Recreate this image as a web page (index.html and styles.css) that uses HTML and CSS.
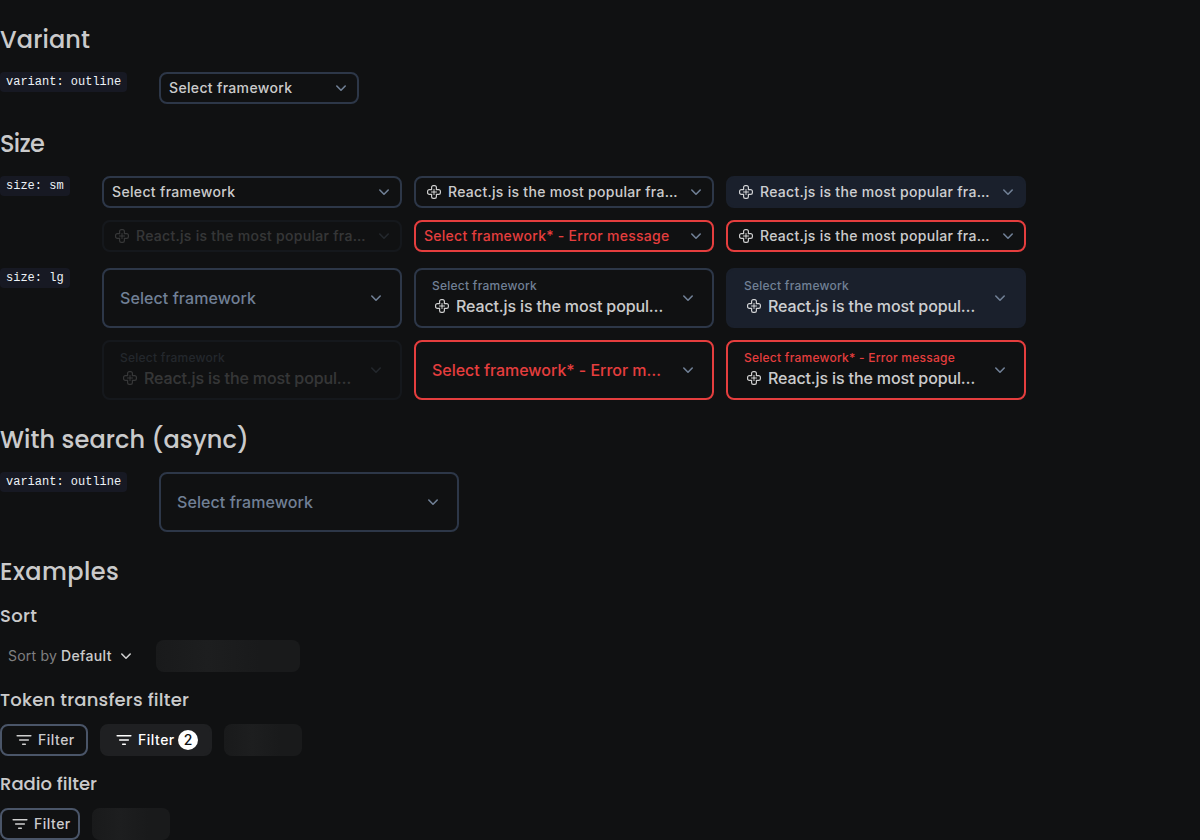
FILE: index.html
```html
<!DOCTYPE html>
<html lang="en">
<head>
<meta charset="utf-8">
<title>Select</title>
<link rel="stylesheet" href="styles.css">
</head>
<body>
<svg class="sprite" aria-hidden="true">
  <symbol id="chevron" viewBox="0 0 20 20"><path d="M5.8 8 10 12.2 14.2 8" fill="none" stroke="currentColor" stroke-width="1.6" stroke-linecap="round" stroke-linejoin="round"/></symbol>
  <symbol id="flower" viewBox="0 0 20 20"><g fill="none" stroke="currentColor" stroke-width="1.2"><path d="M7.6 7.6V5.3a1.7 1.7 0 0 1 1.7-1.7h1.4a1.7 1.7 0 0 1 1.7 1.7V7.6h2.3a1.7 1.7 0 0 1 1.7 1.7v1.4a1.7 1.7 0 0 1-1.7 1.7H12.4v2.3a1.7 1.7 0 0 1-1.7 1.7H9.3a1.7 1.7 0 0 1-1.7-1.7V12.4H5.3a1.7 1.7 0 0 1-1.7-1.7V9.3a1.7 1.7 0 0 1 1.7-1.7z"/><path d="M10 7v6M7 10h6" stroke-width="1"/></g></symbol>
  <symbol id="filter" viewBox="0 0 20 20"><path d="M3.2 5.8h13.6M5.7 10h8.6M8.7 14.2h2.6" fill="none" stroke="currentColor" stroke-width="1.6" stroke-linecap="round"/></symbol>
</svg>
<main class="page">
  <h2 class="h-variant">Variant</h2>
  <div class="samples">
    <div><code>variant: outline</code></div>
    <div class="select narrow"><span class="value">Select framework</span><svg class="chevron"><use href="#chevron"/></svg></div>
  </div>

  <h2 class="h-size">Size</h2>
  <div class="samples sizes">
    <div><code>size: sm</code></div>
    <div class="grid">
      <div class="select"><span class="value">Select framework</span><svg class="chevron"><use href="#chevron"/></svg></div>
      <div class="select"><svg class="icon"><use href="#flower"/></svg><span class="value">React.js is the most popular framework</span><svg class="chevron"><use href="#chevron"/></svg></div>
      <div class="select readonly"><svg class="icon"><use href="#flower"/></svg><span class="value">React.js is the most popular framework</span><svg class="chevron"><use href="#chevron"/></svg></div>
      <div class="select disabled"><svg class="icon"><use href="#flower"/></svg><span class="value">React.js is the most popular framework</span><svg class="chevron"><use href="#chevron"/></svg></div>
      <div class="select invalid"><span class="value error">Select framework* - Error message</span><svg class="chevron"><use href="#chevron"/></svg></div>
      <div class="select invalid"><svg class="icon"><use href="#flower"/></svg><span class="value">React.js is the most popular framework</span><svg class="chevron"><use href="#chevron"/></svg></div>
    </div>
    <div><code>size: lg</code></div>
    <div class="grid">
      <div class="select lg"><span class="value muted">Select framework</span><svg class="chevron"><use href="#chevron"/></svg></div>
      <div class="select lg"><div class="stack"><span class="label">Select framework</span><div class="line"><svg class="icon"><use href="#flower"/></svg><span class="value">React.js is the most popular framework</span></div></div><svg class="chevron"><use href="#chevron"/></svg></div>
      <div class="select lg readonly"><div class="stack"><span class="label">Select framework</span><div class="line"><svg class="icon"><use href="#flower"/></svg><span class="value">React.js is the most popular framework</span></div></div><svg class="chevron"><use href="#chevron"/></svg></div>
      <div class="select lg disabled"><div class="stack"><span class="label">Select framework</span><div class="line"><svg class="icon"><use href="#flower"/></svg><span class="value">React.js is the most popular framework</span></div></div><svg class="chevron"><use href="#chevron"/></svg></div>
      <div class="select lg invalid"><span class="value error">Select framework* - Error message</span><svg class="chevron"><use href="#chevron"/></svg></div>
      <div class="select lg invalid"><div class="stack"><span class="label error">Select framework* - Error message</span><div class="line"><svg class="icon"><use href="#flower"/></svg><span class="value">React.js is the most popular framework</span></div></div><svg class="chevron"><use href="#chevron"/></svg></div>
    </div>
  </div>

  <h2 class="h-search">With search (async)</h2>
  <div class="samples">
    <div><code>variant: outline</code></div>
    <div class="select lg wide"><span class="value muted">Select framework</span><svg class="chevron"><use href="#chevron"/></svg></div>
  </div>

  <h2 class="h-examples">Examples</h2>
  <h3 class="h-sort">Sort</h3>
  <div class="row sort-row">
    <div class="sort"><span class="by">Sort by</span><span>Default</span><svg class="chevron"><use href="#chevron"/></svg></div>
    <div class="skeleton long"></div>
  </div>
  <h3 class="h-token">Token transfers filter</h3>
  <div class="row">
    <div class="filter"><svg class="icon"><use href="#filter"/></svg><span class="text">Filter</span></div>
    <div class="filter active"><svg class="icon"><use href="#filter"/></svg><span class="text">Filter</span><span class="count">2</span></div>
    <div class="skeleton"></div>
  </div>
  <h3 class="h-radio">Radio filter</h3>
  <div class="row">
    <div class="filter compact"><svg class="icon"><use href="#filter"/></svg><span class="text">Filter</span></div>
    <div class="skeleton"></div>
  </div>
</main>
</body>
</html>
```
FILE: styles.css
```css
* { box-sizing: border-box; }
html { overflow: hidden; }
body {
  margin: 0;
  background: #101112;
  color: rgba(255, 255, 255, 0.8);
  font: 500 14px/20px Inter, "Liberation Sans", sans-serif;
  letter-spacing: 0.29px;
}
.sprite { display: none; }
.page { padding-top: 24px; }
h2, h3 { margin: 0; font-family: Poppins, Inter, sans-serif; font-weight: 500; white-space: nowrap; }
h2 { font-size: 24px; line-height: 32px; margin-bottom: 16px; letter-spacing: 0.1px; }
h3 { font-size: 18px; line-height: 24px; margin-bottom: 12px; letter-spacing: 0.2px; }
.h-size { letter-spacing: -0.7px; }
.h-examples { letter-spacing: 0.4px; }
.h-radio { letter-spacing: 0; }
.h-sort { letter-spacing: 0.35px; }
.samples {
  display: grid;
  grid-template-columns: 127px max-content;
  column-gap: 32px;
  row-gap: 16px;
  align-items: start;
  margin-bottom: 24px;
}
.sizes { grid-template-columns: 70px max-content; }
code {
  display: block;
  height: 20px;
  padding: 1px 0 0 6px;
  border-radius: 4px;
  background: #171923;
  color: #edf2f7;
  font: 400 12px/19px "Liberation Mono", monospace;
  letter-spacing: 0;
  white-space: nowrap;
}
.grid { display: grid; grid-template-columns: repeat(3, 300px); gap: 12px; }
.select {
  display: flex;
  align-items: center;
  height: 32px;
  padding: 0 6px 0 8px;
  border: 2px solid #2d3748;
  border-radius: 8px;
}
.narrow { width: 200px; }
.wide { width: 300px; }
.value { flex: 1; min-width: 0; overflow: hidden; text-overflow: ellipsis; white-space: nowrap; }
.value:first-child { letter-spacing: 0.34px; }
.icon { width: 20px; height: 20px; flex: none; margin-right: 4px; }
.chevron { width: 20px; height: 20px; flex: none; margin-left: 4px; color: #718096; }
.readonly { border-color: #1a202c; background: #1a202c; }
.disabled { opacity: 0.2; }
.invalid { border-color: #e53e3e; }
.value.error { letter-spacing: 0.27px; }
.lg { height: 60px; padding: 0 14px 0 16px; font-size: 16px; line-height: 24px; }
.lg .value.muted { letter-spacing: 0.08px; }
.lg .chevron { margin-left: 8px; }
.lg .value.error { letter-spacing: -0.03px; }
.stack { flex: 1; min-width: 0; }
.line { display: flex; align-items: center; letter-spacing: -0.13px; }
.label { display: block; font-size: 12px; line-height: 16px; letter-spacing: 0.25px; color: #718096; white-space: nowrap; }
.muted { color: #718096; }
.error { color: #e53e3e; }
.row { display: flex; gap: 12px; margin-bottom: 16px; }
.sort-row { gap: 16px; }
.sort { display: flex; align-items: center; width: 140px; height: 32px; padding-left: 8px; white-space: nowrap; letter-spacing: 0.35px; }
.sort .chevron { color: inherit; }
.by { margin-right: 4px; font-weight: 400; letter-spacing: 0.22px; color: rgba(255, 255, 255, 0.48); }
.filter {
  display: flex;
  align-items: center;
  width: 88px;
  height: 32px;
  padding-left: 12px;
  border: 2px solid #4a5568;
  border-radius: 8px;
}
.text { width: 36px; letter-spacing: 0.5px; white-space: nowrap; }
.active { width: 112px; border-color: #1f2022; background: #1f2022; color: #fff; }
.compact { width: 80px; padding-left: 8px; }
.count {
  width: 20px;
  height: 20px;
  margin-left: 4px;
  border-radius: 50%;
  background: #fff;
  color: #101112;
  text-align: center;
  letter-spacing: 0;
}
.skeleton {
  width: 78px;
  height: 32px;
  border-radius: 8px;
  background: linear-gradient(90deg, #191a1b, #1d1e1f 36%, #191a1b 72%);
}
.long { width: 144px; }
```
